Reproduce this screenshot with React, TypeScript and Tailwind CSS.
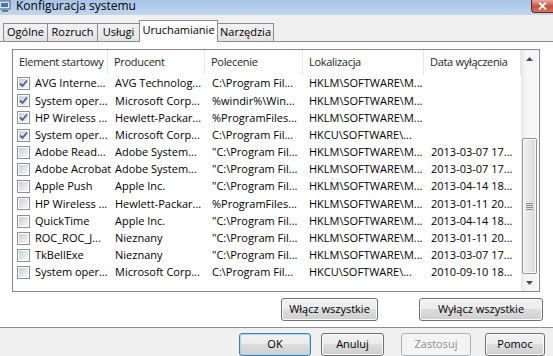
import React from 'react'

type Row = { on: boolean; name: string; maker: string; cmd: string; loc: string; date: string }

const HKLM = 'HKLM\\SOFTWARE\\M...'
const HKCU = 'HKCU\\SOFTWARE\\...'
const QPF = '"C:\\Program Fil...'

const rows: Row[] = [
  { on: true, name: 'AVG Interne...', maker: 'AVG Technolog...', cmd: 'C:\\Program Fil...', loc: HKLM, date: '' },
  { on: true, name: 'System oper...', maker: 'Microsoft Corp...', cmd: '%windir%\\Win...', loc: HKLM, date: '' },
  { on: true, name: 'HP Wireless ...', maker: 'Hewlett-Packar...', cmd: '%ProgramFiles...', loc: HKLM, date: '' },
  { on: true, name: 'System oper...', maker: 'Microsoft Corp...', cmd: 'C:\\Program Fil...', loc: HKCU, date: '' },
  { on: false, name: 'Adobe Read...', maker: 'Adobe System...', cmd: QPF, loc: HKLM, date: '2013-03-07 17...' },
  { on: false, name: 'Adobe Acrobat', maker: 'Adobe System...', cmd: QPF, loc: HKLM, date: '2013-03-07 17...' },
  { on: false, name: 'Apple Push', maker: 'Apple Inc.', cmd: QPF, loc: HKLM, date: '2013-04-14 18...' },
  { on: false, name: 'HP Wireless ...', maker: 'Hewlett-Packar...', cmd: '%ProgramFiles...', loc: HKLM, date: '2013-01-11 20...' },
  { on: false, name: 'QuickTime', maker: 'Apple Inc.', cmd: QPF, loc: HKLM, date: '2013-04-14 18...' },
  { on: false, name: 'ROC_ROC_J...', maker: 'Nieznany', cmd: QPF, loc: HKLM, date: '2013-01-11 20...' },
  { on: false, name: 'TkBellExe', maker: 'Nieznany', cmd: QPF, loc: HKLM, date: '2013-03-07 17...' },
  { on: false, name: 'System oper...', maker: 'Microsoft Corp...', cmd: 'C:\\Program Fil...', loc: HKCU, date: '2010-09-10 18...' },
]

const tabs = [
  { label: 'Ogólne', w: 'w-[45px]' },
  { label: 'Rozruch', w: 'w-[51px]' },
  { label: 'Usługi', w: 'w-[43px]' },
  { label: 'Uruchamianie', w: 'w-[79px]', active: true },
  { label: 'Narzędzia', w: 'w-[57px]' },
]

const Checkbox = ({ checked }: { checked: boolean }) => (
  <div className="w-[13px] h-[13px] shrink-0 border border-[#8e8f8f] bg-white p-px">
    <div className="w-full h-full bg-[linear-gradient(135deg,#cbcfd5,#f7f7f7)] flex items-center justify-center">
      {checked && (
        <svg width="9" height="9" viewBox="0 0 9 9">
          <path d="M1 4.5 L3.5 7 L8 1.5" fill="none" stroke="#4a5f97" strokeWidth="1.8" />
        </svg>
      )}
    </div>
  </div>
)

const Button = ({ label, className, kind }: { label: string; className: string; kind?: 'default' | 'disabled' }) => {
  if (kind === 'disabled') {
    return (
      <div className={`h-[23px] rounded-[3px] border border-[#adb2b5] bg-[#f4f4f4] flex items-center justify-center text-[#8d8d8d] ${className}`}>
        {label}
      </div>
    )
  }
  return (
    <div
      className={`h-[23px] rounded-[3px] border flex items-center justify-center text-black bg-[linear-gradient(#f2f2f2_0%,#ebebeb_50%,#dddddd_50%,#cfcfcf_100%)] ${
        kind === 'default'
          ? 'border-[#3c7fb1] shadow-[inset_0_0_0_1px_#a6d8f5]'
          : 'border-[#707070] shadow-[inset_0_0_0_1px_#fcfcfc]'
      } ${className}`}
    >
      {label}
    </div>
  )
}

export default function App() {
  return (
    <div className="w-[553px] h-[356px] overflow-hidden bg-[#f0f0f0] font-['Open_Sans',sans-serif] text-[11px] text-black">
      {/* title bar */}
      <div className="h-[15px] flex justify-between overflow-hidden bg-[linear-gradient(#a8c4e5,#c2d7ee)]">
        <div className="flex items-center h-[17px] -mt-[3px] gap-[5px]">
          <svg width="12" height="14" viewBox="0 0 12 14" className="-ml-[1px]">
            <rect x="0" y="2" width="11" height="8" fill="#dfe7f0" stroke="#4a5a70" />
            <rect x="2" y="4" width="7" height="4" fill="#3b78c4" />
            <rect x="3" y="11" width="6" height="2" fill="#6d7a8c" />
          </svg>
          <span className="text-[12px] leading-none">Konfiguracja systemu</span>
        </div>
        <div className="w-[22px] h-[13px] rounded-bl-[4px] border border-[#6b2020] border-t-0 border-r-0 bg-[linear-gradient(#e4a79a,#c8503c_55%,#d8765f)] flex items-center justify-center">
          <svg width="9" height="8" viewBox="0 0 9 8">
            <path d="M1 0.5 L8 7.5 M8 0.5 L1 7.5" stroke="#ffffff" strokeWidth="1.8" />
          </svg>
        </div>
      </div>

      {/* tabs */}
      <div className="h-[27px] -mb-px relative z-10 flex items-end pl-[3px]">
        {tabs.map((t) =>
          t.active ? (
            <div
              key={t.label}
              className={`${t.w} h-[22px] -ml-px relative z-10 border border-b-0 border-[#898c95] bg-white flex items-start justify-center pt-[1px]`}
            >
              {t.label}
            </div>
          ) : (
            <div
              key={t.label}
              className={`${t.w} h-[19px] -ml-px first:ml-0 border border-[#898c95] bg-[linear-gradient(#f2f2f2,#e3e3e3)] flex items-center justify-center`}
            >
              {t.label}
            </div>
          )
        )}
      </div>

      {/* tab panel */}
      <div className="h-[287px] border-y border-[#898c95] bg-white pt-[7px] pl-[12px]">
        <div className="w-[528px] h-[243px] border border-[#828790] flex">
          <div className="w-[508px] flex flex-col">
            <div className="h-[25px] flex items-center whitespace-nowrap text-[#1e1e1e] tracking-[-0.3px]">
              <div className="w-[95px] h-full pl-[6px] pt-[4px] overflow-hidden border-r border-[#e3e6ea]">Element startowy</div>
              <div className="w-[97px] h-full pl-[6px] pt-[4px] border-r border-[#e3e6ea]">Producent</div>
              <div className="w-[98px] h-full pl-[6px] pt-[4px] border-r border-[#e3e6ea]">Polecenie</div>
              <div className="w-[121px] h-full pl-[6px] pt-[4px] border-r border-[#e3e6ea]">Lokalizacja</div>
              <div className="w-[97px] h-full pl-[6px] pt-[4px] border-r border-[#e3e6ea]">Data wyłączenia</div>
            </div>
            {rows.map((r, i) => (
              <div key={i} className="h-[17.2px] flex items-center whitespace-nowrap">
                <div className="w-[95px] pl-[4px] flex items-center gap-[5px]">
                  <Checkbox checked={r.on} />
                  <span>{r.name}</span>
                </div>
                <div className="w-[97px] pl-[7px]">{r.maker}</div>
                <div className="w-[98px] pl-[7px]">{r.cmd}</div>
                <div className="w-[121px] pl-[6px]">{r.loc}</div>
                <div className="w-[97px] pl-[7px]">{r.date}</div>
              </div>
            ))}
          </div>

          {/* scrollbar */}
          <div className="w-[17px] flex flex-col bg-[linear-gradient(90deg,#e8e8e8,#f6f6f6_30%,#f6f6f6)]">
            <div className="h-[17px] flex items-center justify-center">
              <svg width="7" height="4" viewBox="0 0 7 4">
                <path d="M0 4 L3.5 0 L7 4 Z" fill="#4d4d4d" />
              </svg>
            </div>
            <div className="flex-1 pt-[71px] px-px">
              <div className="h-[136px] rounded-[2px] border border-[#979797] bg-[linear-gradient(90deg,#f1f1f1,#e4e4e4_60%,#d8d8d8)] shadow-[inset_0_0_0_1px_#fafafa] flex items-center justify-center">
                <div className="flex flex-col gap-[1px]">
                  <div className="w-[7px] h-px bg-[#8a8a8a]" />
                  <div className="w-[7px] h-px bg-[#8a8a8a]" />
                  <div className="w-[7px] h-px bg-[#8a8a8a]" />
                  <div className="w-[7px] h-px bg-[#8a8a8a]" />
                </div>
              </div>
            </div>
            <div className="h-[17px] flex items-center justify-center">
              <svg width="7" height="4" viewBox="0 0 7 4">
                <path d="M0 0 L3.5 4 L7 0 Z" fill="#4d4d4d" />
              </svg>
            </div>
          </div>
        </div>

        <div className="flex justify-end gap-[41px] pr-[10px] mt-[6px]">
          <Button label="Włącz wszystkie" className="w-[97px]" />
          <Button label="Wyłącz wszystkie" className="w-[124px]" />
        </div>
      </div>

      {/* dialog buttons */}
      <div className="flex mt-[5px] pl-[239px]">
        <Button label="OK" kind="default" className="w-[72px]" />
        <Button label="Anuluj" className="w-[63px] ml-[10px]" />
        <Button label="Zastosuj" kind="disabled" className="w-[70px] ml-[17px]" />
        <Button label="Pomoc" className="w-[60px] ml-[14px]" />
      </div>
    </div>
  )
}
